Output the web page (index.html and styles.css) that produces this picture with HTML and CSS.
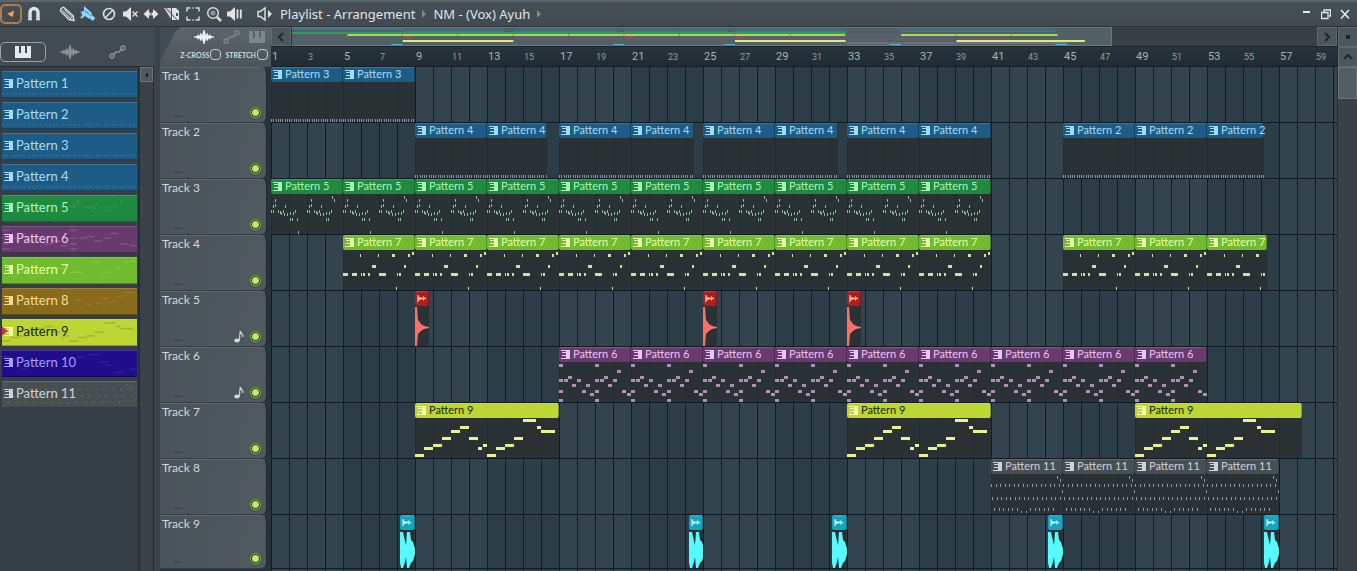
FILE: index.html
```html
<!DOCTYPE html>
<html lang="en">
<head>
  <meta charset="UTF-8" />
  <meta name="viewport" content="width=device-width, initial-scale=1.0" />
  <title>Playlist - Arrangement</title>
  <link rel="stylesheet" href="styles.css">
</head>
<body>
  <header class="titlebar">
    <div class="tools">
      <button class="tool menu" aria-label="Menu"><svg width="10" height="10" viewBox="0 0 10 10"><path d="M1 5 8 1.5 7 8Z" fill="#f0a35c"/></svg></button>
      <button class="tool snap" aria-label="Snap"><svg width="14" height="16" viewBox="0 0 14 16"><path d="M3 12V6.500a4 4 0 0 1 8 0V12" fill="none" stroke="#dfe4e6" stroke-width="3.400"/><path d="M1 13.300h4M9 13.300h4" stroke="#dfe4e6" stroke-width="2"/></svg></button>
      <button class="tool" aria-label="Draw"><svg width="16" height="16" viewBox="0 0 16 16"><path d="M2 2.500 4.500 1 14 9.500 15 14.500 10 13.500 1.500 5Z" fill="#59646a" stroke="#d5dadd" stroke-width="1.400"/><path d="M3.500 4.500 11 12M5.500 3.500 13 10.500M11 13l3-3" stroke="#d5dadd"/></svg></button>
      <button class="tool" aria-label="Paint"><svg width="16" height="16" viewBox="0 0 16 16"><path d="M4 0 12 7 9 13 0 6 4 5Z" fill="#8fd4fa"/><path d="M2 9 8 5M1 12 7 7" stroke="#8fd4fa" stroke-width="2"/><path d="M9 9l5 4.500" stroke="#8fd4fa" stroke-width="4"/><path d="M5 5l4 3M10 9l1 1" stroke="#38657d"/></svg></button>
      <button class="tool" aria-label="Delete"><svg width="16" height="16" viewBox="0 0 16 16"><circle cx="8" cy="8" r="5.500" fill="none" stroke="#d5dadd" stroke-width="1.700"/><path d="M4 12 12 4" stroke="#d5dadd" stroke-width="1.700"/></svg></button>
      <button class="tool" aria-label="Mute"><svg width="16" height="16" viewBox="0 0 16 16"><path d="M1 5.500h3L9 1v14L4 10.500H1Z" fill="#dfe4e6"/><path d="M10.500 5.500l5 5M15.500 5.500l-5 5" stroke="#dfe4e6" stroke-width="1.400"/></svg></button>
      <button class="tool" aria-label="Slip"><svg width="16" height="16" viewBox="0 0 16 16"><path d="M.500 8 6 3v3.500h4V3l5.500 5L10 13V9.500H6V13Z" fill="#dfe4e6"/><path d="M8 3v10" stroke="#424c52"/></svg></button>
      <button class="tool" aria-label="Slice"><svg width="16" height="16" viewBox="0 0 16 16"><path d="M0 2h7v11Z" fill="#cfd5d8"/><path d="M8 2h4l3 3v9H8Z" fill="#dfe4e6"/><path d="M1 1 13 14" stroke="#424c52"/><path d="M13 7v3" stroke="#424c52" stroke-width="2"/></svg></button>
      <button class="tool" aria-label="Select"><svg width="16" height="16" viewBox="0 0 16 16"><path d="M2 5.500V2h3.500M10.500 2H14v3.500M14 10.500V14h-3.500M5.500 14H2v-3.500M7.300 2h1.400M7.300 14h1.400" fill="none" stroke="#d5dadd" stroke-width="1.500"/></svg></button>
      <button class="tool" aria-label="Zoom"><svg width="16" height="16" viewBox="0 0 16 16"><circle cx="7" cy="7" r="5.300" fill="none" stroke="#d5dadd" stroke-width="1.500"/><circle cx="7" cy="7" r="2.500" fill="#8d979c"/><path d="M11 11l4 4" stroke="#d5dadd" stroke-width="2.600"/></svg></button>
      <button class="tool" aria-label="Playback"><svg width="16" height="16" viewBox="0 0 16 16"><path d="M0 5.500h3L8 1v14L3 10.500H0Z" fill="#dfe4e6"/><path d="M10.500 3.500v9M13.800 3.500v9" stroke="#dfe4e6" stroke-width="1.800"/></svg></button>
    </div>
    <nav class="crumbs">
      <svg width="16" height="16" viewBox="0 0 16 16"><path d="M1 5.500h2.500L8 2v12L3.500 10.500H1Z" fill="none" stroke="#dfe4e6" stroke-width="1.400"/><path d="M11 4l4 4-4 4Z" fill="#dfe4e6"/></svg>
      <a href="#playlist">Playlist - Arrangement</a>
      <i class="arrow"></i>
      <a href="#clip">NM - (Vox) Ayuh</a>
      <i class="arrow"></i>
    </nav>
    <div class="window-buttons">
      <button aria-label="Minimize"><svg width="10" height="12" viewBox="0 0 10 12"><path d="M1 4h7" stroke="#e3e7e9" stroke-width="2"/></svg></button>
      <button aria-label="Restore"><svg width="10" height="12" viewBox="0 0 10 12"><path d="M3 4V2h6.500v6H8M.500 4.500H7v6H.500Z" fill="none" stroke="#e3e7e9" stroke-width="1.300"/></svg></button>
      <button aria-label="Close"><svg width="10" height="12" viewBox="0 0 10 12"><path d="M1 2l8 8.500M9 2 1 10.500" stroke="#e3e7e9" stroke-width="1.700"/></svg></button>
    </div>
  </header>

  <div class="main">
    <aside class="picker">
      <div class="picker-tabs">
        <button class="picker-tab active" aria-label="Patterns"><svg width="17" height="12"><use href="#i-keys"/></svg></button>
        <button class="picker-tab" aria-label="Audio"><svg width="20" height="14" viewBox="0 0 20 14"><use href="#i-wave"/></svg></button>
        <button class="picker-tab" aria-label="Automation"><svg width="17" height="14" viewBox="0 0 17 14"><use href="#i-auto"/></svg></button>
      </div>
      <div class="picker-body">
        <div class="patterns" id="patterns"></div>
        <div class="picker-scroll"><button aria-label="Scroll"></button></div>
      </div>
    </aside>

    <section class="playlist" id="playlist">
      <div class="corner">
        <div class="corner-tabs">
          <svg class="on" width="20" height="14" viewBox="0 0 20 14"><use href="#i-wave"/></svg>
          <svg width="17" height="14" viewBox="0 0 17 14"><use href="#i-auto"/></svg>
          <svg width="17" height="12"><use href="#i-keys"/></svg>
        </div>
        <div class="corner-options">
          <label>Z-CROSS<input type="checkbox"></label>
          <label>STRETCH<input type="checkbox"></label>
        </div>
      </div>
      <div class="timeline">
        <div class="overview">
          <button aria-label="Scroll left"><svg width="8" height="10" viewBox="0 0 8 10"><path d="M6 1 2 5l4 4"/></svg></button>
          <div class="overview-map"><svg class="overview-view" id="overview"></svg></div>
          <button aria-label="Scroll right"><svg width="8" height="10" viewBox="0 0 8 10"><path d="M2 1l4 4-4 4"/></svg></button>
        </div>
        <div class="ruler" id="ruler"></div>
      </div>
      <div class="scroll-top">
        <button aria-label="Zoom"><i class="dot"></i></button>
        <button aria-label="Scroll up"><svg width="10" height="8" viewBox="0 0 10 8"><path d="M1 6l4-4 4 4"/></svg></button>
      </div>
      <div class="tracks" id="tracks"></div>
      <div class="lanes" id="lanes"></div>
      <div class="scroll"><button aria-label="Scroll position"></button></div>
    </section>
  </div>

  <svg class="defs" width="0" height="0">
    <symbol id="i-keys" viewBox="0 0 17 12"><path d="M0 0h4v7h2V0h4v7h2V0h4v12H0Z"/></symbol>
    <symbol id="i-wave" viewBox="0 0 20 14"><path d="M0 6.500 3 6 4 4 5 6 7 2.500 8 5.500 9.500 0h1L12 5.500 13 2.500 15 6l1-2 1 2 3 .500v1L17 8l-1 2-1-2-2 3.500L12 8.500 10.500 14h-1L8 8.500 7 11.500 5 8l-1 2-1-2-3-.500Z"/></symbol>
    <symbol id="i-auto" viewBox="0 0 17 14"><g fill="none" stroke="currentColor" stroke-width="1.500"><circle cx="3" cy="11" r="2"/><circle cx="14" cy="3" r="2"/><path d="M4.500 9.500 7 7h3l2.500-2.500"/></g></symbol>
    <symbol id="i-pattern" viewBox="0 0 9 9"><path d="M0 0h9v9H0V8h5V6H1V5h4V3H1V2h4V1H0Z"/></symbol>
    <symbol id="i-sample" viewBox="0 0 10 9"><path d="M1 1v7M1 3l4 1.500L1 6M1 4.500h8M6.500 2.500v4" fill="none" stroke="currentColor" stroke-width="1.300"/></symbol>
    <symbol id="i-note" viewBox="0 0 10 13"><ellipse cx="3" cy="10.500" rx="2.700" ry="2"/><path d="M5.300 10.500 6.300 1c0 2 3 2.500 2.700 6" fill="none" stroke="currentColor" stroke-width="1.200"/></symbol>
  </svg>
  <script src="script.js"></script>
</body>
</html>
```

FILE: styles.css
```css
:root {
  --bar: 18px;
  --lane: 56px;
  --line: #1c2a33;
  --panel: #424b51;
  --text: #d3d9dc;
}

* {
  box-sizing: border-box;
}

body {
  margin: 0;
  height: 100vh;
  display: flex;
  flex-direction: column;
  overflow: hidden;
  background: var(--panel);
  color: var(--text);
  font-family: Lato, "Liberation Sans", sans-serif;
  font-size: 13px;
}

button {
  display: flex;
  align-items: center;
  justify-content: center;
  padding: 0;
  border: 0;
  background: none;
  color: inherit;
  font: inherit;
}

svg {
  display: block;
  fill: currentColor;
}

.defs {
  position: absolute;
}

/* title bar */
.titlebar {
  flex: none;
  display: flex;
  align-items: center;
  height: 27px;
  border-top: 2px solid #5a666c;
  border-bottom: 1px solid #2b3338;
  background: linear-gradient(#454f55, #404a4f);
}

.tools {
  display: flex;
  align-items: center;
  gap: 5px;
}

.tool {
  width: 16px;
  height: 20px;
}

.menu {
  width: 22px;
  border: 2px solid #b27a45;
  border-radius: 5px;
}

.snap {
  width: 14px;
  margin-right: 13px;
}

.crumbs {
  display: flex;
  align-items: center;
  gap: 7px;
  margin-left: 14px;
  font-family: "Noto Sans", sans-serif;
  font-size: 13px;
}

.crumbs a {
  padding-bottom: 1px;
  color: #e0e4e6;
  text-decoration: none;
}

.arrow {
  border: 4px solid transparent;
  border-left-color: #7e888d;
  border-right: 0;
}

.window-buttons {
  display: flex;
  gap: 9px;
  margin: 0 7px 0 auto;
}

.main {
  flex: 1;
  display: flex;
  min-height: 0;
}

/* pattern picker */
.picker {
  flex: none;
  width: 154px;
  display: flex;
  flex-direction: column;
}

.picker-tabs {
  display: flex;
  align-items: center;
  gap: 1px;
  height: 40px;
  padding-top: 10px;
  border-bottom: 1px solid #252e34;
}

.picker-tab {
  width: 46px;
  height: 20px;
  color: #889196;
}

.picker-tab.active {
  border: 1px solid #9aa3a7;
  border-radius: 5px;
  color: #e6eaec;
}

.picker-body {
  flex: 1;
  display: flex;
  background: #343e44;
}

.patterns {
  flex: 1;
  display: flex;
  flex-direction: column;
  gap: 4px;
  padding: 4px 1px 0 2px;
}

.pattern {
  position: relative;
  justify-content: flex-start;
  gap: 3px;
  height: 27px;
  padding: 0 2px 3px;
  overflow: hidden;
  background: var(--color);
  color: var(--ink);
  border-top: 1px solid rgba(255, 255, 255, 0.15);
  border-bottom: 1px solid rgba(0, 0, 0, 0.25);
}

.pattern.selected::before {
  content: "";
  position: absolute;
  left: -2px;
  border: 6px solid transparent;
  border-left: 8px solid #c93555;
  border-right: 0;
}

.pattern-notes {
  position: absolute;
  inset: 2px 0;
  width: 100%;
  height: 21px;
  opacity: 0.16;
}

.picker-scroll {
  width: 16px;
  border-left: 2px solid #262f35;
  border-right: 1px solid #262f35;
  background: #3a4248;
}

.picker-scroll button {
  width: 13px;
  height: 15px;
  border: 1px solid #6a7479;
  background: #4e585d;
}

.picker-scroll button::before {
  content: "";
  width: 2px;
  height: 4px;
  background: #1d2529;
}

/* playlist */
.playlist {
  flex: 1;
  min-width: 0;
  display: grid;
  grid-template-columns: 111px minmax(0, 1fr) 20px;
  grid-template-rows: 40px minmax(0, 1fr);
  border-left: 6px solid #3b444a;
}

.corner {
  display: flex;
  flex-direction: column;
  gap: 5px;
  padding: 3px 3px 0 16px;
  background: linear-gradient(#5b656b, #4b555a);
  clip-path: polygon(0 100%, 0 34px, 16px 4px, 22px 0, 100% 0, 100% 100%);
}

.corner-tabs {
  display: flex;
  align-items: center;
  gap: 9px;
  padding-left: 18px;
  color: #7c868b;
}

.corner-tabs .on {
  color: #eef1f2;
}

.corner-options {
  display: flex;
  justify-content: flex-end;
  gap: 4px;
  font-size: 7px;
  font-weight: bold;
  white-space: nowrap;
}

.corner-options label {
  display: flex;
  align-items: center;
  gap: 1px;
}

.corner-options input {
  appearance: none;
  width: 11px;
  height: 11px;
  margin: 0;
  border: 1px solid #c5cbce;
  border-radius: 4px;
}

.timeline {
  border-left: 1px solid var(--line);
  margin-left: -1px;
}

.overview {
  display: flex;
  height: 20px;
  border-bottom: 1px solid #1b2429;
}

.overview button,
.scroll-top button {
  width: 20px;
  height: 19px;
  border: 1px solid #5c666b;
  background: #4c565b;
}

.overview button svg,
.scroll-top svg {
  fill: none;
  stroke: #1f272b;
  stroke-width: 2;
}

.overview-map {
  flex: 1;
  min-width: 0;
  background: #373f44;
}

.overview-view {
  width: 821px;
  max-width: 100%;
  height: 19px;
  border: 1px solid #6c777c;
  border-left-color: #242d32;
  background: #536066;
}

.ruler {
  display: flex;
  height: 20px;
  overflow: hidden;
  background: linear-gradient(#27343c, #202c33);
  border-bottom: 1px solid #15202a;
}

.ruler span {
  flex: none;
  width: calc(var(--bar) * 2);
  padding-left: 1px;
  color: #929ca1;
  font-family: Roboto, sans-serif;
  font-size: 9px;
  line-height: 20px;
}

.ruler .beat {
  color: #a8b1b5;
  font-size: 11px;
}

.scroll-top {
  border-left: 1px solid #242d32;
}

.scroll-top button {
  height: 20px;
}

.dot {
  width: 4px;
  height: 4px;
  background: #1f272b;
}

.tracks {
  overflow: hidden;
  background: #27323a;
}

.track {
  display: grid;
  grid-template-columns: 1fr auto auto;
  align-content: space-between;
  align-items: center;
  column-gap: 6px;
  width: 107px;
  height: var(--lane);
  padding: 0 5px 2px 2px;
  border-top: 1px solid #5d676c;
  border-right: 1px solid #1f292f;
  border-bottom: 1px solid #343d43;
  border-radius: 0 6px 6px 0;
  background: linear-gradient(100deg, #495359, #50595f);
  font-size: 12px;
}

.track-name {
  grid-column: 1 / -1;
}

.track-menu {
  padding-left: 12px;
  color: #2c353a;
}

.track input {
  appearance: none;
  grid-column: 3;
  width: 11px;
  height: 11px;
  margin: 0;
  border: 1px solid #7fb94a;
  border-radius: 50%;
  background: radial-gradient(circle, #b6ee6b 0 3px, #2a3c20 4px);
}

.lanes {
  overflow: hidden;
  background: repeating-linear-gradient(90deg, #34444e 0 calc(var(--bar) * 4), #2d3d47 calc(var(--bar) * 4) calc(var(--bar) * 8));
}

.lane {
  display: flex;
  height: var(--lane);
  border-bottom: 1px solid #101c25;
  background: repeating-linear-gradient(90deg, #101d26 0 1px, transparent 1px var(--bar));
}

/* the last visible track is slightly shorter */
.track:nth-child(9),
.lane:nth-child(9) {
  height: 54px;
}

.clip {
  flex: none;
  background: rgba(41, 48, 51, 0.88);
}

.clip-name {
  display: flex;
  align-items: center;
  gap: 3px;
  height: 15px;
  margin-bottom: 1px;
  padding: 0 0 2px 2px;
  border-top: 1px solid rgba(255, 255, 255, 0.15);
  border-right: 1px solid rgba(0, 0, 0, 0.25);
  border-radius: 2px;
  background: var(--color);
  color: var(--ink);
  font-size: 11px;
  line-height: 12px;
  white-space: nowrap;
}

.clip-name svg {
  flex: none;
}

.clip-body {
  width: 100%;
  height: 39px;
  color: var(--note);
}

.scroll {
  border-left: 1px solid #242d32;
  background: #3a4146;
}

.scroll button {
  width: 19px;
  height: 32px;
  border: 1px solid #6a7479;
  background: #535d62;
}

.blue { --color: #1d5c86; --ink: #a5dcf5; --note: #7795a4; }
.green { --color: #1f8a3f; --ink: #a9f3bd; --note: #7fbf98; }
.purple { --color: #693a70; --ink: #efc3f2; --note: #b08dbb; }
.lime { --color: #70bb2e; --ink: #e6ffa8; --note: #c9e695; }
.gold { --color: #8a6b1e; --ink: #f3dd8c; --note: #f3dd8c; }
.yellow { --color: #bdd634; --ink: #20260c; --note: #ebf28d; }
.yellow use { color: #f3f9a8; fill: #f3f9a8; }
.navy { --color: #1f0d8c; --ink: #a79cf5; --note: #a79cf5; }
.gray { --color: #484f53; --ink: #cdd3d6; --note: #8f999d; }
.red { --color: #b01d1a; --ink: #ffb5ae; --note: #ff6f68; }
.cyan { --color: #12a6c4; --ink: #b5f4ff; --note: #55fbff; }
```

FILE: script.js
```js
const BAR = 18;
const PHRASE = BAR * 4;

// notes are [x, y, width, height] inside a 72 x 40 clip body
const small = [[4,4],[2,10],[4,9],[14,10],[0,15],[2,15],[7,15],[9,16],[10,17],[12,15],[13,18],[16,18],[19,17],[22,17],[24,15],[19,23],[21,23]];
const ticks = [];
for (let x = 0; x < PHRASE; x += 2.25) ticks.push([Math.round(x), 36, 1, 3]);

const p11 = [[66,1,1,3],[69,4,1,3],[71,15,1,3],[30,36,1,2],[35,36,1,2]];
for (let i = 0; i < 16; i++) {
  p11.push([Math.round(i * 4.5), 9, 1, 3], [Math.round(i * 4.5) + 1, 22, 1, 3]);
  if (i < 6) p11.push([3 + Math.round(i * 4.5), 33, 1, 3], [39 + Math.round(i * 4.5), 33, 1, 3]);
}

const notes = {
  1: ticks,
  2: ticks,
  3: ticks,
  4: ticks,
  5: [
    ...small.map(([x, y]) => [x, y, 1, 3]),
    ...small.map(([x, y]) => [x + 36, y, 1, 3]),
    [26,23,1,3],[61,1,1,3],[63,4,1,3],[27,36,1,3]
  ],
  6: [
    [0,1],[0,16],[0,27],[0,36],[5,16],[9,13],[13,21],[18,16],[23,27],[27,21],[31,30],
    [36,1],[36,16],[36,27],[36,36],[41,16],[45,13],[49,21],[54,16],[58,7],[63,27],[68,30]
  ].map(([x, y]) => [x, y, 4, 3]),
  7: [
    [0,22,5,3],[9,22,5,3],[18,22,1,3],[20,22,2,3],[25,22,2,3],[29,14,4,3],[36,22,7,3],[54,22,1,3],[56,22,2,3],
    [61,14,2,3],[49,3,3,3],[17,3,1,3],[35,3,1,3],[65,3,2,3],[69,1,2,3],[53,36,1,3]
  ],
  8: [[38,16,5,2],[45,26,3,2],[54,13,3,2],[50,22,3,2],[58,20,3,2],[66,2,4,2],[62,9,3,2],[54,35,2,2],[14,30,3,2]],
  9: [
    [0,35,9,3],[9,28,9,3],[18,25,9,3],[27,18,9,3],[36,11,9,3],[45,7,9,3],[54,18,9,3],[63,28,4,3],[68,25,4,3],
    [72,35,9,3],[81,28,9,3],[90,25,9,3],[99,18,9,3],[108,0,13,3],[122,7,4,3],[126,11,14,3]
  ],
  10: [[0,6,5,2],[46,2,6,2],[40,7,4,2],[52,16,5,2],[55,22,4,2],[60,36,5,2],[68,30,4,2],[10,30,4,2]],
  11: p11
};

const patterns = ['', 'blue', 'blue', 'blue', 'blue', 'green', 'purple', 'lime', 'gold', 'yellow', 'navy', 'gray'];

const run = (pattern, from, count) =>
  Array.from({ length: count }, (_, i) => [pattern, from + i * PHRASE, PHRASE]);

// clips are [pattern, start, length], 18 steps to a bar
const tracks = [
  run(3, 0, 2),
  [[4,144,72],[4,216,60],[4,288,72],[4,360,63],[4,432,72],[4,504,63],[4,576,72],[4,648,72],[2,792,72],[2,864,72],[2,936,57]],
  run(5, 0, 10),
  [...run(7, 72, 9), ...run(7, 792, 2), [7,936,60]],
  [['red',144,14],['red',432,14],['red',576,14]],
  run(6, 288, 9),
  [[9,144,144],[9,576,144],[9,864,167]],
  run(11, 720, 4),
  [['cyan',129,15],['cyan',418,14],['cyan',561,15],['cyan',777,15],['cyan',993,15]]
];

const waves = {
  red: '<path d="M0 0H2L3 13 6 17 9 19 14 20V21L9 22 6 24 3 27 2 39H0Z"/>',
  cyan: '<path d="M0 1H3L5 10 6 14V26L5 31 3 37H1L0 32Z"/><path d="M6 14 7 1H10L11 9 13 11 15 18V23L13 30 11 32 9 37H7L6 26Z"/>'
};

const rects = list => list.map(([x, y, w, h]) => `<rect x="${x}" y="${y}" width="${w}" height="${h}"/>`).join('');

document.getElementById('patterns').innerHTML = patterns.slice(1).map((color, i) => {
  const n = i + 1;
  const width = n === 9 ? 144 : 72;
  return `<button class="pattern ${color}${n === 9 ? ' selected' : ''}">
    <svg class="pattern-notes" viewBox="0 0 ${width} 40" preserveAspectRatio="none">${rects(notes[n])}</svg>
    <svg width="9" height="9"><use href="#i-pattern"/></svg>Pattern ${n}</button>`;
}).join('');

let labels = '';
for (let bar = 1; bar < 60; bar += 2) {
  labels += `<span${bar % 4 === 1 ? ' class="beat"' : ''}>${bar}</span>`;
}
document.getElementById('ruler').innerHTML = labels;

document.getElementById('tracks').innerHTML = tracks.map((_, i) => `
  <div class="track">
    <label class="track-name" for="track${i}">Track ${i + 1}</label>
    <span class="track-menu">...</span>
    ${i === 4 || i === 5 ? '<svg width="10" height="13"><use href="#i-note"/></svg>' : ''}
    <input type="checkbox" id="track${i}" checked>
  </div>`).join('');

function clipHtml([pattern, start, length], end) {
  const audio = typeof pattern === 'string';
  const color = audio ? pattern : patterns[pattern];
  const head = audio
    ? '<svg width="10" height="9"><use href="#i-sample"/></svg>'
    : `<svg width="9" height="9"><use href="#i-pattern"/></svg>Pattern ${pattern}`;
  const body = audio ? waves[pattern] : rects(notes[pattern]);
  return `<div class="clip ${color}" style="margin-left:${start - end}px;width:${length}px">
    <div class="clip-name">${head}</div>
    <svg class="clip-body"${audio ? '' : ' shape-rendering="crispEdges"'}>${body}</svg>
  </div>`;
}

document.getElementById('lanes').innerHTML = [...tracks, []].map(clips => {
  let end = 0;
  const html = clips.map(clip => {
    const out = clipHtml(clip, end);
    end = clip[1] + clip[2];
    return out;
  }).join('');
  return `<div class="lane">${html}</div>`;
}).join('');

const mapColors = {
  blue: '#3b7391', green: '#37985a', lime: '#a0dc5a', red: '#a84a48',
  purple: '#6b5877', yellow: '#e2e67c', gray: '#66727a', cyan: '#46b7ca'
};
const scale = 0.769;
document.getElementById('overview').innerHTML = tracks.map((clips, i) =>
  clips.map(([pattern, start, length]) => {
    const color = typeof pattern === 'string' ? pattern : patterns[pattern];
    const width = color === 'red' ? 12 : length;
    return `<rect x="${start * scale}" y="${i * 2}" width="${width * scale - (color === 'lime' ? 0.5 : 0)}" height="2" fill="${mapColors[color]}"/>`;
  }).join('')).join('');
```
